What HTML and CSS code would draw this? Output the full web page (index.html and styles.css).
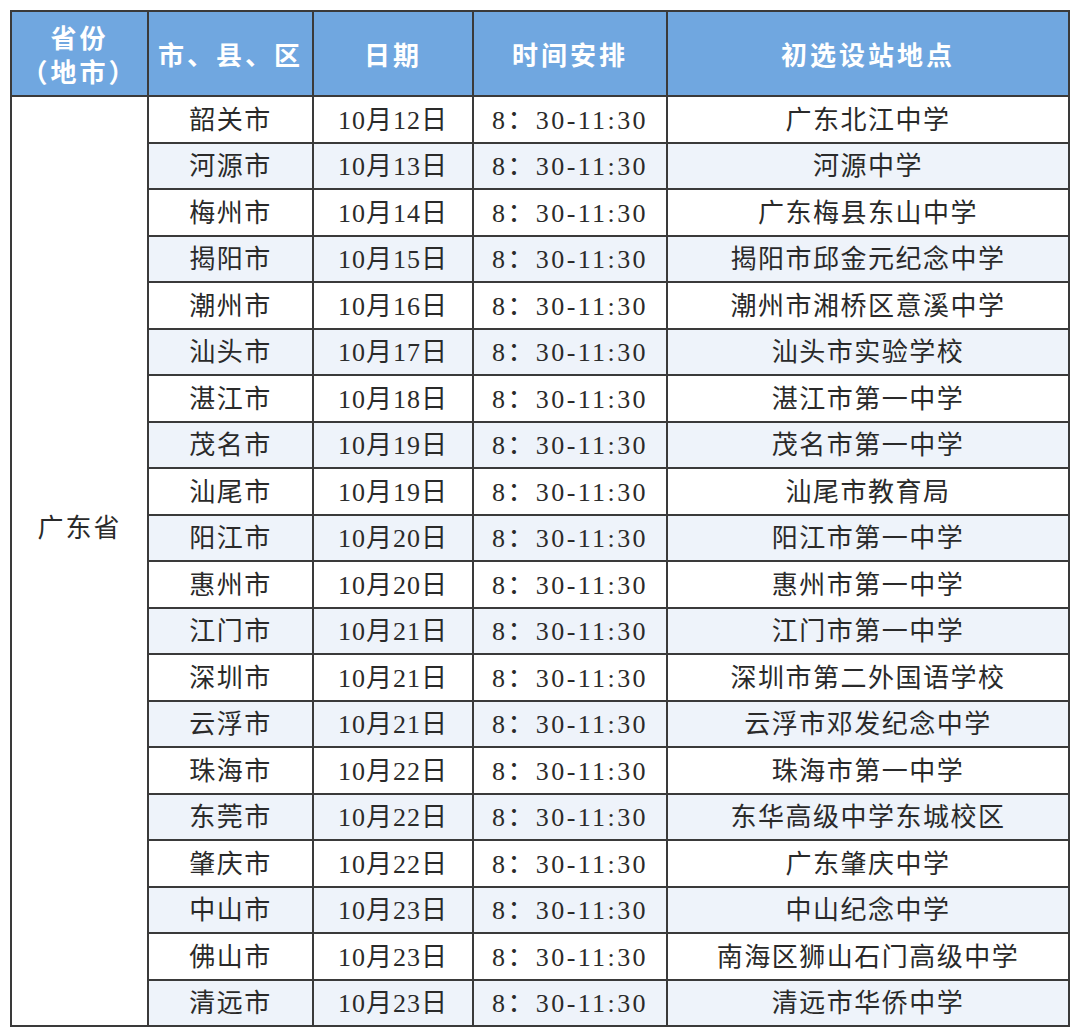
FILE: index.html
```html
<!DOCTYPE html>
<html lang="zh">
<head>
<meta charset="utf-8">
<link rel="stylesheet" href="styles.css">
</head>
<body>
<table class="sched">
<colgroup><col class="c1"><col class="c2"><col class="c3"><col class="c4"><col class="c5"></colgroup>
<thead>
<tr><th>省份<br>（地市）</th><th>市、县、区</th><th>日期</th><th>时间安排</th><th>初选设站地点</th></tr>
</thead>
<tbody>
<tr><td class="prov" rowspan="20"><span>广东省</span></td><td>韶关市</td><td class="d">10月12日</td><td class="t">8：30-11:30</td><td>广东北江中学</td></tr>
<tr><td>河源市</td><td class="d">10月13日</td><td class="t">8：30-11:30</td><td>河源中学</td></tr>
<tr><td>梅州市</td><td class="d">10月14日</td><td class="t">8：30-11:30</td><td>广东梅县东山中学</td></tr>
<tr><td>揭阳市</td><td class="d">10月15日</td><td class="t">8：30-11:30</td><td>揭阳市邱金元纪念中学</td></tr>
<tr><td>潮州市</td><td class="d">10月16日</td><td class="t">8：30-11:30</td><td>潮州市湘桥区意溪中学</td></tr>
<tr><td>汕头市</td><td class="d">10月17日</td><td class="t">8：30-11:30</td><td>汕头市实验学校</td></tr>
<tr><td>湛江市</td><td class="d">10月18日</td><td class="t">8：30-11:30</td><td>湛江市第一中学</td></tr>
<tr><td>茂名市</td><td class="d">10月19日</td><td class="t">8：30-11:30</td><td>茂名市第一中学</td></tr>
<tr><td>汕尾市</td><td class="d">10月19日</td><td class="t">8：30-11:30</td><td>汕尾市教育局</td></tr>
<tr><td>阳江市</td><td class="d">10月20日</td><td class="t">8：30-11:30</td><td>阳江市第一中学</td></tr>
<tr><td>惠州市</td><td class="d">10月20日</td><td class="t">8：30-11:30</td><td>惠州市第一中学</td></tr>
<tr><td>江门市</td><td class="d">10月21日</td><td class="t">8：30-11:30</td><td>江门市第一中学</td></tr>
<tr><td>深圳市</td><td class="d">10月21日</td><td class="t">8：30-11:30</td><td>深圳市第二外国语学校</td></tr>
<tr><td>云浮市</td><td class="d">10月21日</td><td class="t">8：30-11:30</td><td>云浮市邓发纪念中学</td></tr>
<tr><td>珠海市</td><td class="d">10月22日</td><td class="t">8：30-11:30</td><td>珠海市第一中学</td></tr>
<tr><td>东莞市</td><td class="d">10月22日</td><td class="t">8：30-11:30</td><td>东华高级中学东城校区</td></tr>
<tr><td>肇庆市</td><td class="d">10月22日</td><td class="t">8：30-11:30</td><td>广东肇庆中学</td></tr>
<tr><td>中山市</td><td class="d">10月23日</td><td class="t">8：30-11:30</td><td>中山纪念中学</td></tr>
<tr><td>佛山市</td><td class="d">10月23日</td><td class="t">8：30-11:30</td><td>南海区狮山石门高级中学</td></tr>
<tr><td>清远市</td><td class="d">10月23日</td><td class="t">8：30-11:30</td><td>清远市华侨中学</td></tr>
</tbody>
</table>
</body>
</html>
```

FILE: styles.css
```css
html, body {
  margin: 0;
  padding: 0;
  background: #ffffff;
}

.sched {
  margin: 10px 0 0 10px;
  border-collapse: collapse;
  table-layout: fixed;
  width: 1058px;
  font-family: "Liberation Serif", "Noto Sans CJK SC", serif;
  color: #2a2a2a;
  border: 2px solid #3a3a3a;
}

.c1 { width: 137px; }
.c2 { width: 165px; }
.c3 { width: 160px; }
.c4 { width: 194px; }
.c5 { width: 402px; }

.sched th,
.sched td {
  border: 2px solid #3a3a3a;
  text-align: center;
  vertical-align: middle;
  padding: 0;
}

.sched th {
  background: #70a7e0;
  color: #ffffff;
  font-family: "Noto Sans CJK SC", sans-serif;
  font-weight: 700;
  font-size: 26px;
  letter-spacing: 3px;
  line-height: 34px;
  height: 83px;
}

.sched td {
  height: 41.5px;
  padding-top: 3px;
  font-size: 26px;
  letter-spacing: 1.5px;
  line-height: 30px;
  font-weight: 400;
}

.sched tbody tr:nth-child(even) td {
  background: #eef3fa;
}

.sched tbody tr:first-child td.prov {
  background: #ffffff;
  padding-top: 0;
  padding-bottom: 68px;
}

.prov span {
  font-family: "Noto Sans CJK SC", sans-serif;
  letter-spacing: 2px;
}

.sched td.d {
  letter-spacing: 1px;
}

.sched td.t {
  letter-spacing: 2.4px;
}
```
